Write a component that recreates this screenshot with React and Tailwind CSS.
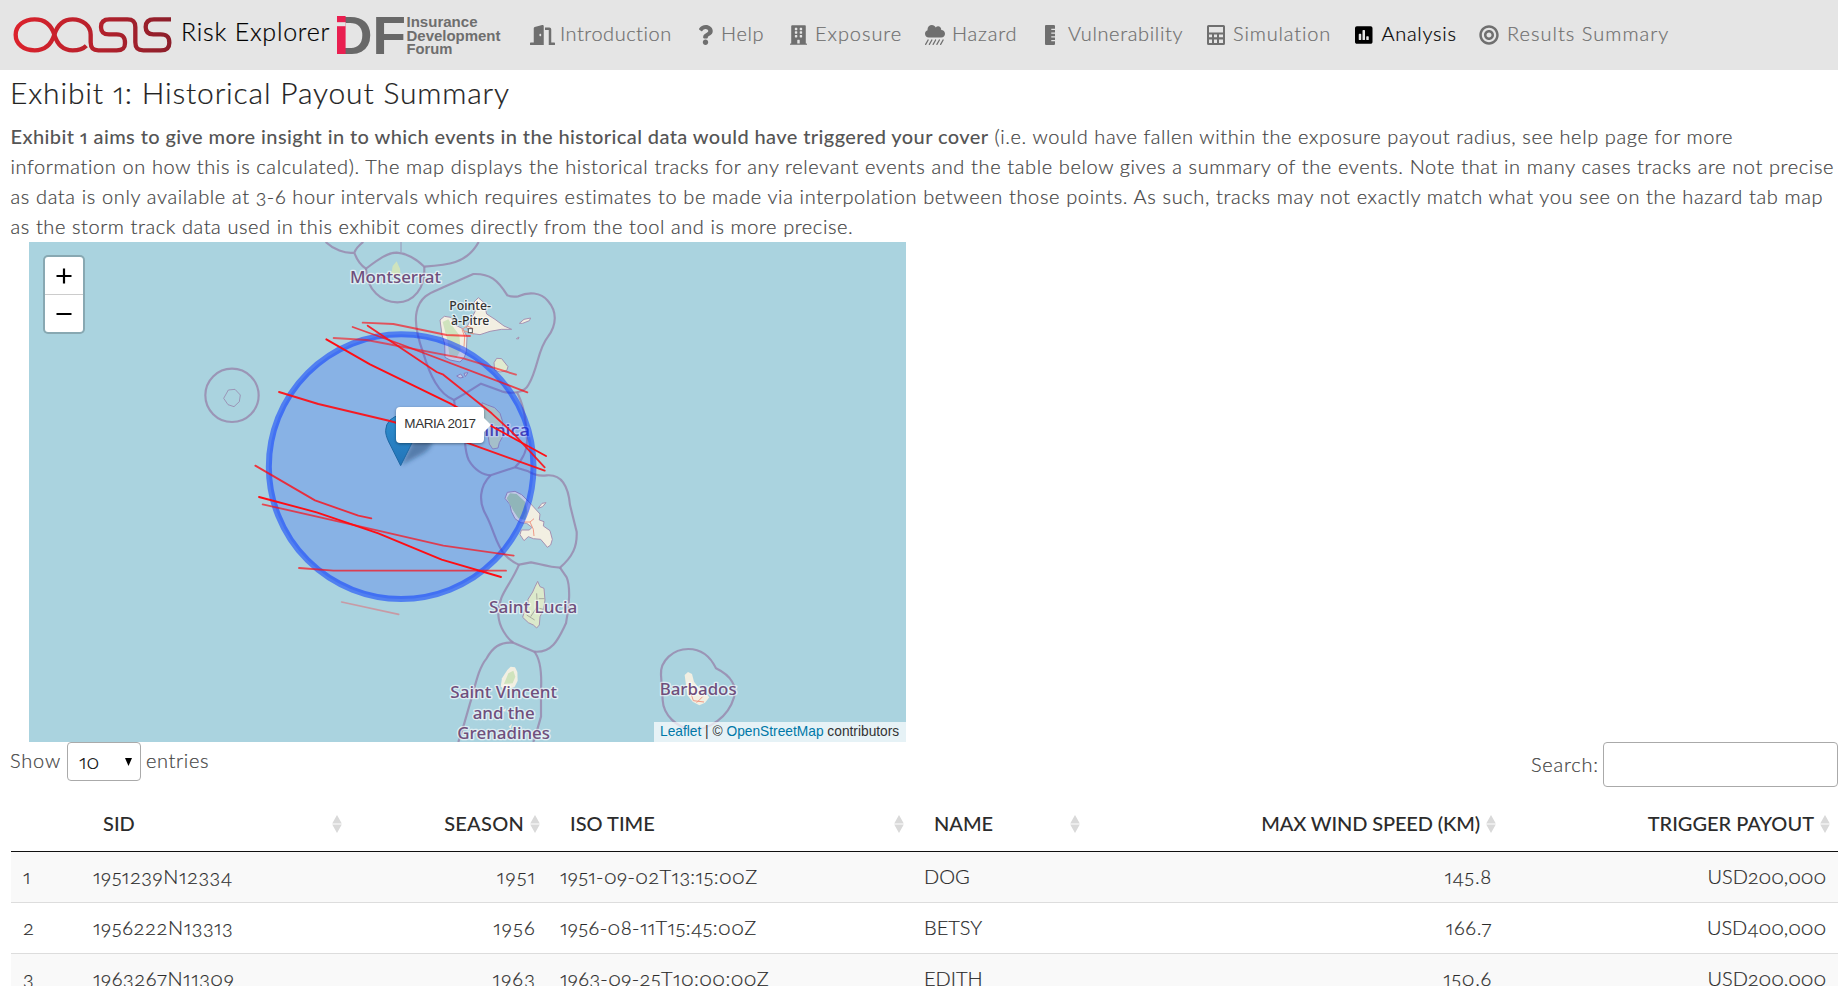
import {
  FaDoorOpen, FaQuestion, FaBuilding, FaCloudShowersHeavy, FaRulerVertical, FaPoll, FaBullseye,
} from "react-icons/fa";

function CalcIcon() {
  return (
    <svg width="18" height="20" viewBox="0 0 18 20" className="shrink-0">
      <path
        fill="currentColor"
        fillRule="evenodd"
        d="M1.5 0h15A1.5 1.5 0 0 1 18 1.500v17a1.500 1.500 0 0 1-1.500 1.500h-15A1.500 1.500 0 0 1 0 18.500v-17A1.500 1.500 0 0 1 1.500 0zM2 2v5.500h14V2zM2 9.500v2.800h3V9.500zM7 9.500v2.800h3V9.500zM12 9.500v2.800h4V9.500zM2 14.500V18h3v-3.500zM7 14.500V18h3v-3.500zM12 14.500V18h4v-3.500z"
      />
    </svg>
  );
}

const NAV = [
  { label: "Introduction", cls: "w-[168px]", icon: <FaDoorOpen className="h-5 w-[25px] shrink-0" />, gap: "pl-[5px]", track: "tracking-[0.530px]" },
  { label: "Help", cls: "w-[92px]", icon: <FaQuestion className="h-5 w-[15px] shrink-0" />, gap: "pl-[8px]", track: "tracking-[0.650px]" },
  { label: "Exposure", cls: "w-[135px]", icon: <FaBuilding className="h-5 w-[17px] shrink-0" />, gap: "pl-[8px]", track: "tracking-[0.950px]" },
  { label: "Hazard", cls: "w-[120px]", icon: <FaCloudShowersHeavy className="h-5 w-[20px] shrink-0" />, gap: "pl-[7px]", track: "tracking-[0.800px]" },
  { label: "Vulnerability", cls: "w-[162px]", icon: <FaRulerVertical className="h-5 w-[10px] shrink-0" />, gap: "pl-[13px]", track: "tracking-[0.650px]" },
  { label: "Simulation", cls: "w-[148px]", icon: <CalcIcon />, gap: "pl-[8px]", track: "tracking-[0.850px]" },
  { label: "Analysis", cls: "w-[124px]", icon: <FaPoll className="h-5 w-[17.500px] shrink-0" />, gap: "pl-[9px]", track: "tracking-[0.700px]", active: true },
  { label: "Results Summary", cls: "w-[200px]", icon: <FaBullseye className="h-5 w-[20px] shrink-0" />, gap: "pl-[8px]", track: "tracking-[1.020px]" },
];

function OasisLogo() {
  return (
    <svg width="162" height="40" viewBox="36 44 486 120" className="shrink-0" fill="none">
      <defs>
        <linearGradient id="oasis" gradientUnits="userSpaceOnUse" x1="40" y1="0" x2="512" y2="0">
          <stop offset="0" stopColor="#dc222c" />
          <stop offset="0.5" stopColor="#b8212c" />
          <stop offset="1" stopColor="#8c1f2b" />
        </linearGradient>
      </defs>
      <g stroke="url(#oasis)" strokeWidth="13" strokeLinejoin="round">
        <path d="M163 103C154 132 135 150 104 150C71 150 47 131 47 103C47 76 71 57 104 57C135 57 154 74 163 103C172 134 188 150 218 150C236 150 250 145 259 136" />
        <path d="M163 103C172 74 190 57 218 57C248 57 272 76 272 103V126C272 144 280 150 295 150H350C368 150 375 144 375 128C375 109 367 102 350 102H327C310 102 303 95 303 80C303 64 312 57 328 57H382C399 57 406 64 406 80V126C406 144 414 150 430 150H482C500 150 508 144 508 127C508 109 500 102 482 102H460C444 102 437 95 437 80C437 64 445 57 462 57H513" />
      </g>
    </svg>
  );
}

function IdfLogo() {
  return (
    <svg width="168" height="46" viewBox="0 0 168 46" className="shrink-0" fontFamily='"Liberation Sans", Arial, sans-serif' fontWeight="700">
      <text x="-4" y="42" fontSize="54.500" textLength="73" lengthAdjust="spacingAndGlyphs" fill="#686868">DF</text>
      <rect x="-4" y="3" width="4" height="41" fill="#e5e5e5" />
      <rect x="0" y="4" width="8.600" height="38" fill="#e91f50" />
      <rect x="0" y="10.200" width="8.600" height="4" fill="#e5e5e5" />
      <g fill="#6e6e6e" fontSize="15">
        <text x="69.500" y="15" textLength="71" lengthAdjust="spacingAndGlyphs">Insurance</text>
        <text x="69.500" y="28.500" textLength="94" lengthAdjust="spacingAndGlyphs">Development</text>
        <text x="69.500" y="42" textLength="46" lengthAdjust="spacingAndGlyphs">Forum</text>
      </g>
    </svg>
  );
}

function Label({ x, y, w, size = 46, fill = "#6f4f7c", children }) {
  return (
    <text x={x} y={y} textLength={w} fontSize={size} fontWeight="500" fill={fill} lengthAdjust="spacingAndGlyphs" stroke="#ffffff" strokeOpacity="0.6" strokeWidth="8" strokeLinejoin="round" paintOrder="stroke">
      {children}
    </text>
  );
}

function StormMap() {
  return (
    <svg width="877" height="500" viewBox="-513 6 2631 1500" className="block" fill="none" fontFamily='"Noto Sans", sans-serif'>
      <defs>
        <linearGradient id="pin" x1="0" y1="0" x2="0" y2="1">
          <stop offset="0" stopColor="#2e8fd0" />
          <stop offset="1" stopColor="#2374b8" />
        </linearGradient>
        <filter id="soft" x="-30%" y="-30%" width="160%" height="160%"><feGaussianBlur stdDeviation="6" /></filter>
      </defs>
      <rect x="-513" y="6" width="2631" height="1500" fill="#aad3df" />

      {/* land */}
      <g fill="#f2efe2" stroke="#a592b2" strokeWidth="3" strokeLinejoin="round">
        <path fill="#cfe3bd" stroke="none" d="M578 78L590 64L600 86L602 104L592 112L574 102Z" />
        <path d="M720 240L733 229L752 232L768 256L788 266L801 290L799 335L793 352L780 366L750 360L735 352L734 312L726 285Z" />
        <path fill="#cfe3bd" stroke="none" d="M728 246L745 238L760 262L778 285L782 330L770 352L748 345L742 300Z" />
        <path d="M800 262L812 240L825 215L822 186L835 173L852 188L860 222L885 238L912 258L935 268L905 268L870 274L840 284L812 280Z" />
        <path fill="#e0ebcf" d="M882 368L890 355L905 356L924 380L920 392L900 396L884 390Z" />
        <path d="M958 250L972 238L992 234L988 242L968 250Z" />
        <path d="M949 296L957 291L955 297Z" />
        <path d="M770 408L782 402L790 412L780 414ZM792 400L804 398L796 410Z" />
        <path fill="#cfe3bd" d="M846 488L862 495L884 503L900 520L908 545L908 590L898 608L894 624L878 627L868 612L862 570L846 530Z" />
        <path d="M915 775L922 757L945 754L965 764L985 784L1000 800L1020 822L1018 840L1032 845L1030 858L1050 872L1057 898L1052 915L1042 922L1034 912L1022 898L1000 896L985 890L972 902L960 884L964 870L988 870L996 862L980 850L962 848L945 836L934 814L930 794Z" />
        <path fill="#b4d6a8" stroke="none" d="M920 775L930 760L950 762L975 785L982 815L975 840L955 835L940 812Z" />
        <path d="M1014 805L1026 790L1038 788L1028 800Z" />
        <path fill="#dce9cb" d="M1013 1024L1020 1040L1032 1045L1035 1080L1030 1110L1020 1130L1018 1155L1010 1164L1000 1155L985 1148L968 1132L974 1110L984 1100L984 1078L998 1056L1005 1040Z" />
        <path stroke="none" d="M922 1290L932 1280L945 1282L952 1296L953 1322L944 1340L920 1350L902 1340L906 1315Z" />
        <path fill="#cfe3bd" stroke="none" d="M925 1300L940 1292L946 1310L938 1330L912 1332Z" />
        <path stroke="none" d="M908 1412L918 1405L916 1415ZM926 1460L936 1452L932 1466Z" />
        <path stroke="none" d="M1454 1305L1464 1296L1476 1302L1482 1325L1495 1342L1515 1358L1528 1372L1515 1388L1498 1396L1478 1385L1462 1365Z" />
      </g>
      <g stroke="#ef9a86" strokeWidth="3">
        <path d="M792 320L794 290L786 268L802 258L820 266M790 272L822 282M972 846L990 846L1002 836M990 846L1000 868L1002 888" />
        <path d="M1468 1345L1480 1382L1512 1386M1490 1388L1508 1370" />
      </g>
      <path d="M992 1130L1012 1100L1010 1060M980 1125L1004 1140M1016 1076L1034 1076M1014 1104L1030 1108" stroke="#a9a9a0" strokeWidth="3" />

      {/* maritime boundaries */}
      <g stroke="#9787ad" strokeOpacity="0.82" strokeWidth="6.500" strokeLinejoin="round">
        <path d="M377 6C400 28 435 42 463 38C468 25 478 15 490 6M463 38C470 58 482 76 498 86C530 62 560 38 590 38C622 40 652 60 673 80C740 76 800 72 836 6" />
        <path d="M603 6V36" strokeWidth="3" />
        <path d="M498 86C500 150 545 187 592 187C640 187 677 145 673 80" />
        <path d="M820 102C870 100 893 120 922 166Q935 172 955 169C985 155 1022 156 1044 183C1072 215 1070 255 1044 290C1012 330 1015 385 985 435C972 460 935 462 905 454L843 431L800 458L762 480C715 462 690 405 670 340C652 290 642 250 650 215C662 160 705 155 730 142Z" />
        <path d="M762 480C764 505 772 530 788 560C798 600 792 630 806 660C823 690 850 706 872 706L945 682C972 655 985 620 980 588C978 530 970 490 950 455" />
        <path d="M872 706C838 740 835 785 858 825C882 870 888 915 915 945C930 960 945 970 957 974L993 967C1020 972 1050 982 1080 983C1118 950 1132 920 1130 875L1110 795C1105 740 1085 702 1040 706Q1010 710 985 694L945 682" />
        <path d="M957 974C930 1040 895 1060 895 1125C897 1160 920 1195 940 1208L1003 1235C1060 1240 1078 1190 1098 1150C1108 1100 1112 1040 1100 1012L1080 983" />
        <path d="M940 1208C900 1205 878 1222 860 1255C832 1288 824 1350 810 1390L790 1460L775 1506M1003 1235C1025 1262 1025 1310 1023 1350V1430L1010 1475L1000 1506" />
        <circle cx="96" cy="466" r="80" />
        <path d="M85 450L105 448L121 465L118 485L102 500L84 494L71 475Z" strokeWidth="3" />
        <path d="M1383 1305C1380 1262 1420 1227 1465 1227C1510 1227 1535 1258 1548 1285C1595 1308 1612 1340 1602 1372C1585 1430 1530 1470 1475 1470C1430 1462 1390 1425 1388 1380Z" />
      </g>

      {/* place names */}
      <Label x={450} y={130} w={273}>Montserrat</Label>
      <Label x={748} y={210} w={125} size={38} fill="#333333">Pointe-</Label>
      <Label x={753} y={255} w={115} size={38} fill="#333333">à-Pitre</Label>
      <Label x={742} y={587} w={248} fill="#5b45a0">Dominica</Label>
      <Label x={867} y={1119} w={265}>Saint Lucia</Label>
      <Label x={751} y={1374} w={320}>Saint Vincent</Label>
      <Label x={818} y={1436} w={186}>and the</Label>
      <Label x={772} y={1497} w={278}>Grenadines</Label>
      <Label x={1379} y={1366} w={231}>Barbados</Label>
      <rect x="805" y="266" width="12" height="12" fill="#fff" stroke="#555" strokeWidth="3" />

      {/* payout radius */}
      <circle cx="603.500" cy="680" r="397" fill="#0033ff" fillOpacity="0.2" stroke="#0033ff" strokeOpacity="0.52" strokeWidth="18" />

      {/* pin */}
      <path d="M604 676L640 600L690 590C705 610 690 630 660 645Z" fill="#123a66" fillOpacity="0.45" filter="url(#soft)" />
      <g transform="translate(555 525) scale(3.750)">
        <path d="M0.500 12.500A12 12 0 0 1 24.500 12.500C24.500 17.500 21.500 22.500 19.500 26.500L12.500 40.500L5.500 26.500C3.500 22.500 0.500 17.500 0.500 12.500Z" fill="url(#pin)" stroke="#2068a4" strokeWidth="0.800" />
        <circle cx="14.500" cy="13" r="4.500" fill="#fff" />
      </g>

      {/* storm tracks */}
      <g stroke="#ff0d14" strokeWidth="5.500" strokeLinecap="round" strokeLinejoin="round">
        <path strokeOpacity="0.65" d="M488 248L580 252L740 285L810 288" />
        <path strokeOpacity="0.72" d="M458 261L600 312L982 457" />
        <path strokeOpacity="0.88" d="M503 257L710 396L730 404L875 520L940 580L1034 682" />
        <path strokeOpacity="0.6" d="M401 294L500 300L790 355L948 404" />
        <path d="M379 298L510 373L750 490L868 555L1038 648" />
        <path strokeOpacity="0.92" d="M237 456L355 492L570 543L800 608L1034 692" />
        <path strokeOpacity="0.8" d="M166 677L345 781L475 827L514 835" />
        <path d="M177 771L350 817L535 880L725 959L903 1011" />
        <path strokeOpacity="0.7" d="M188 793L440 850L730 917L941 947" />
        <path strokeOpacity="0.7" d="M297 984L400 992H918" />
        <path stroke="#e06c75" strokeOpacity="0.55" strokeWidth="5" d="M425 1086L596 1123" />
      </g>
    </svg>
  );
}

function SortIcon({ className = "" }) {
  return (
    <svg width="10" height="18" viewBox="0 0 10 18" className={className} fill="#d9d9d9">
      <path d="M5 0L9.800 8.500H0.200ZM5 18L0.200 9.500H9.800Z" />
    </svg>
  );
}

const COLS = [
  { title: "SID", right: false, track: "tracking-[0px]" },
  { title: "SEASON", right: true, track: "tracking-[0.250px]" },
  { title: "ISO TIME", right: false, track: "tracking-[0px]" },
  { title: "NAME", right: false, track: "tracking-[0px]" },
  { title: "MAX WIND SPEED (KM)", right: true, track: "tracking-[-0.130px]" },
  { title: "TRIGGER PAYOUT", right: true, track: "tracking-[0px]" },
];

const ROWS = [
  ["1951239N12334", "1951", "1951-09-02T13:15:00Z", "DOG", "145.8", "USD200,000"],
  ["1956222N13313", "1956", "1956-08-11T15:45:00Z", "BETSY", "166.7", "USD400,000"],
  ["1963267N11309", "1963", "1963-09-25T10:00:00Z", "EDITH", "150.6", "USD200,000"],
];
const CELL = [
  "tracking-[0.640px]",
  "text-right tracking-[1.200px]",
  "tracking-[0.430px]",
  "tracking-[0px]",
  "text-right tracking-[0.700px]",
  "text-right tracking-[-0.050px]",
];

export default function App() {
  return (
    <div className="h-[986px] w-[1838px] overflow-hidden bg-white font-[Lato,sans-serif] text-[20px] font-light text-[#444] [font-variant-numeric:oldstyle-nums_proportional-nums] [-webkit-text-stroke:0.2px]">
      <nav className="flex h-[70px] items-center bg-[#e5e5e5] pl-3">
        <OasisLogo />
        <span className="w-[163px] whitespace-nowrap pb-[8px] pl-[7px] text-[25px] leading-8 tracking-[0.750px] text-black">Risk Explorer</span>
        <div className="pb-[1px] [-webkit-text-stroke:0]"><IdfLogo /></div>
        <div className="ml-[25px] flex items-center text-[#6f6f6f]">
          {NAV.map((n) => (
            <a key={n.label} className={`flex shrink-0 items-center whitespace-nowrap pb-[2px] ${n.cls} ${n.active ? "text-black" : ""}`}>
              <span className="pt-[1px]">{n.icon}</span>
              <span className={`pb-[2px] leading-6 ${n.gap} ${n.track}`}>{n.label}</span>
            </a>
          ))}
        </div>
      </nav>

      <h1 className="h-[51px] pl-[10px] pt-[4px] text-[30px] leading-9 tracking-[0.820px] text-[#222]">Exhibit 1: Historical Payout Summary</h1>

      <div className="h-[121px] whitespace-nowrap pl-[10.500px] leading-[30px]">
        <p><span className="font-medium tracking-[0.405px] text-[#555] [-webkit-text-stroke:0]">Exhibit 1 aims to give more insight in to which events in the historical data would have triggered your cover</span><span className="tracking-[0.600px]"> (i.e. would have fallen within the exposure payout radius, see help page for more</span></p>
        <p className="tracking-[0.620px]">information on how this is calculated). The map displays the historical tracks for any relevant events and the table below gives a summary of the events. Note that in many cases tracks are not precise</p>
        <p className="tracking-[0.635px]">as data is only available at 3-6 hour intervals which requires estimates to be made via interpolation between those points. As such, tracks may not exactly match what you see on the hazard tab map</p>
        <p className="tracking-[0.590px]">as the storm track data used in this exhibit comes directly from the tool and is more precise.</p>
      </div>

      <div className="relative ml-[29px] h-[500px] w-[877px] [-webkit-text-stroke:0]">
        <StormMap />
        <div className="absolute left-[13.500px] top-[13px] w-[42px] overflow-hidden rounded-[5px] border-[2.500px] border-black/20 bg-white bg-clip-padding">
          <div className="flex h-[38px] items-center justify-center border-b border-[#ccc]">
            <svg width="16" height="16" viewBox="0 0 16 16" stroke="#000" strokeWidth="2.200"><path d="M8 0.500v15M0.500 8h15" /></svg>
          </div>
          <div className="flex h-[37px] items-center justify-center">
            <svg width="16" height="16" viewBox="0 0 16 16" stroke="#000" strokeWidth="2.200"><path d="M0.500 8h15" /></svg>
          </div>
        </div>
        <div className="absolute left-[367px] top-[165px] flex h-9 w-[88px] items-center justify-center rounded bg-white pb-[2px] font-[Liberation_Sans,Arial,sans-serif] text-[13.500px] font-normal tracking-[-0.450px] text-[#333] shadow-[0_1px_3px_rgba(0,0,0,0.4)] [font-variant-numeric:normal]">
          MARIA 2017
          <svg className="absolute left-[87px] top-[10px]" width="8" height="16" viewBox="0 0 8 16"><path d="M0 0L8 8L0 16Z" fill="#fff" /></svg>
        </div>
        <div className="absolute bottom-0 right-0 h-5 w-[252px] whitespace-nowrap bg-white/70 pl-[6px] font-[Liberation_Sans,Arial,sans-serif] text-[13.750px] font-normal leading-[19px] text-[#333]">
          <span className="text-[#0078a8]">Leaflet</span> | © <span className="text-[#0078a8]">OpenStreetMap</span> contributors
        </div>
      </div>

      <div className="flex h-[55px] items-start justify-between pl-[10px]">
        <div className="flex items-center">
          <span className="w-[57px] pb-[4px] tracking-[0.800px]">Show</span>
          <div className="flex h-[39px] w-[74px] items-center justify-between rounded-[4px] border border-[#aaa] pl-[11px] pr-2 text-black">
            <span className="pb-[2px]">10</span>
            <svg width="7" height="8" viewBox="0 0 8 8" preserveAspectRatio="none"><path d="M0 0H8L4 8Z" fill="#000" /></svg>
          </div>
          <span className="pb-[4px] pl-[5px] tracking-[0.650px]">entries</span>
        </div>
        <div className="flex items-center">
          <span className="w-[72px] pb-[2px] tracking-[0.750px]">Search:</span>
          <div className="h-[45px] w-[235px] rounded-[4px] border border-[#aaa] bg-white" />
        </div>
      </div>

      <table className="ml-[11px] w-[1827px] table-fixed border-separate border-spacing-0 whitespace-nowrap">
        <colgroup>
          <col className="w-[70px]" /><col className="w-[269px]" /><col className="w-[198px]" /><col className="w-[364px]" />
          <col className="w-[176px]" /><col className="w-[416px]" /><col className="w-[334px]" />
        </colgroup>
        <thead>
          <tr className="h-[55px] text-[#2c2c2c]">
            <th className="border-b border-[#111]" />
            {COLS.map((c) => (
              <th key={c.title} className={`border-b border-[#111] p-0 pl-[22px] pr-[8px] font-medium [-webkit-text-stroke:0] ${c.track}`}>
                <div className={`flex items-center ${c.right ? "justify-end gap-[6px]" : "justify-between"}`}>
                  <span className="pb-[3px]">{c.title}</span>
                  <SortIcon className="-mt-px" />
                </div>
              </th>
            ))}
          </tr>
        </thead>
        <tbody className="text-[#2a2a2a]">
          {ROWS.map((r, i) => (
            <tr key={r[0]} className={`h-[51px] ${i % 2 ? "bg-white" : "bg-[#f9f9f9]"}`}>
              <td className="border-b border-[#ddd] p-0 pb-[2px] pl-3">{i + 1}</td>
              {r.map((v, j) => (
                <td key={j} className={`border-b border-[#ddd] p-0 px-3 pb-[2px] ${CELL[j]}`}>{v}</td>
              ))}
            </tr>
          ))}
        </tbody>
      </table>
    </div>
  );
}
